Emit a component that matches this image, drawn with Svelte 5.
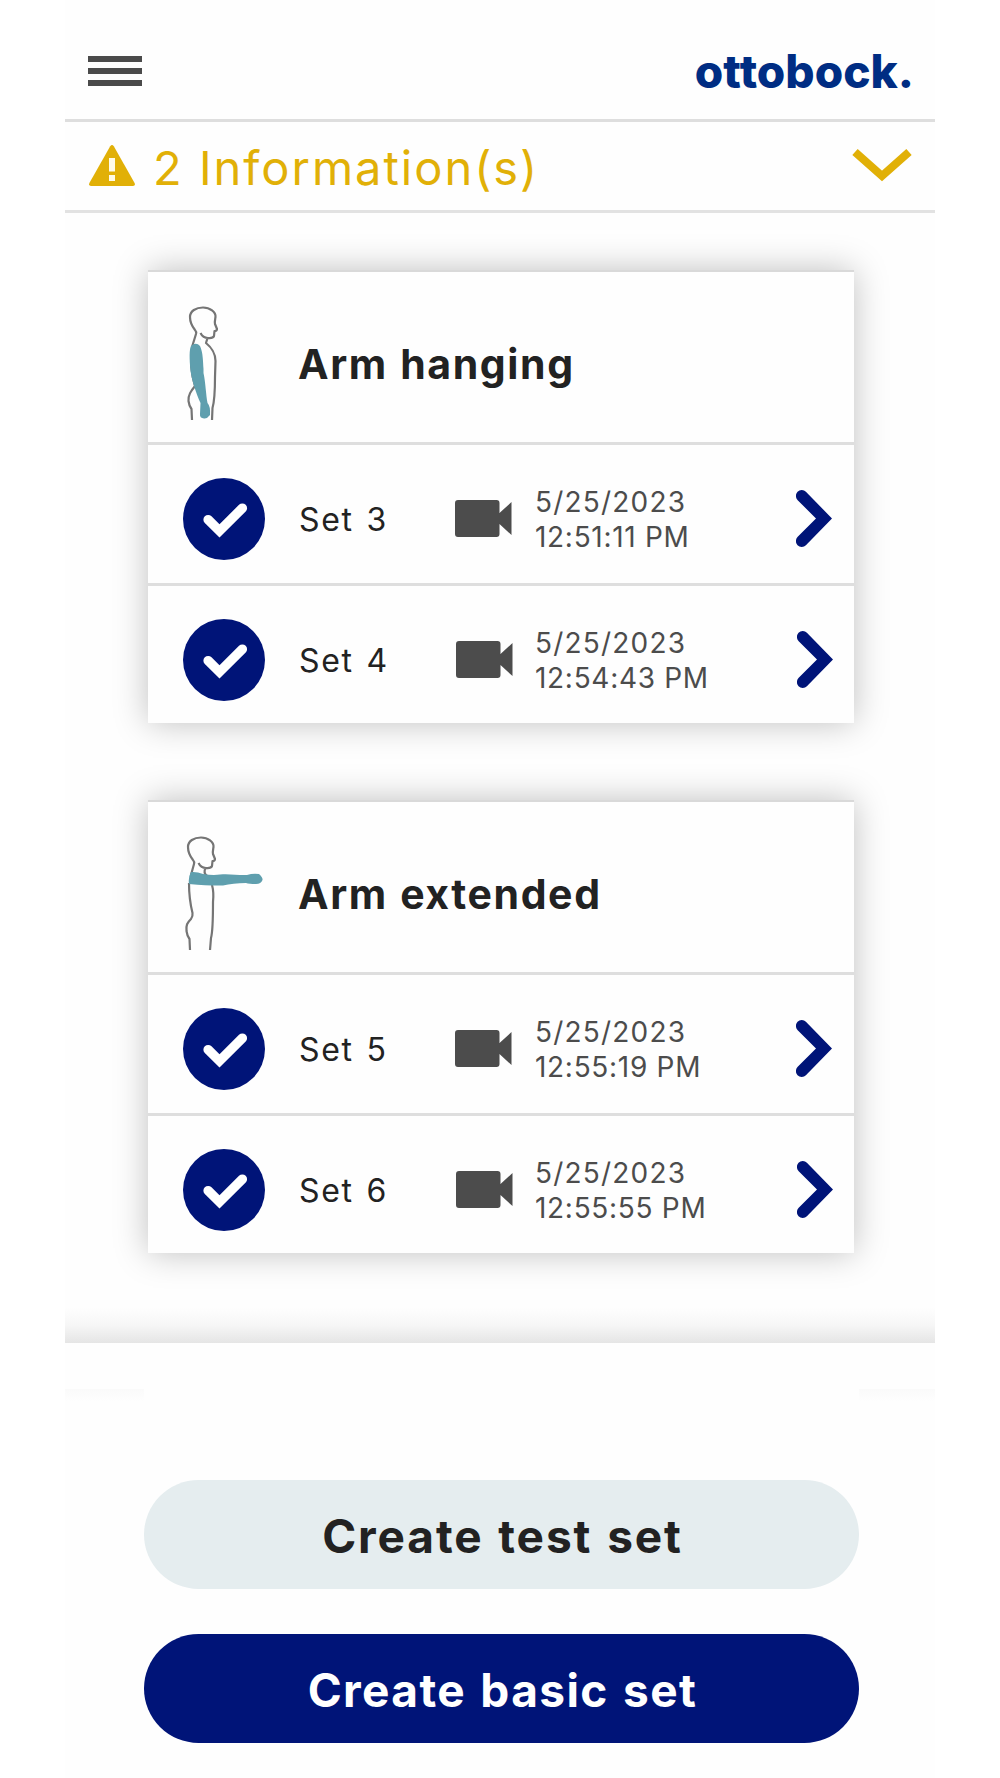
<script>
  const groups = [
    {
      title: "Arm hanging",
      pose: "hanging",
      sets: [
        { name: "Set 3", date: "5/25/2023", time: "12:51:11 PM" },
        { name: "Set 4", date: "5/25/2023", time: "12:54:43 PM" },
      ],
    },
    {
      title: "Arm extended",
      pose: "extended",
      sets: [
        { name: "Set 5", date: "5/25/2023", time: "12:55:19 PM" },
        { name: "Set 6", date: "5/25/2023", time: "12:55:55 PM" },
      ],
    },
  ];
</script>

<div class="screen">
  <header>
    <button class="menu" aria-label="Menu">
      <span></span>
      <span></span>
      <span></span>
    </button>
    <div class="logo">o<span class="tight">t</span>tobock.</div>
  </header>

  <div class="info">
    <svg class="warning" viewBox="0 0 46 41">
      <path
        d="M21.2 1.2Q23-1 24.8 1.2L45.6 38Q46.600 40.600 44 41H2Q-.6 40.600.4 38Z"
        fill="#e1b007"
      />
      <path d="M20 13h6v13.500h-6zM20 30h6v6h-6z" fill="#fffbe8" />
    </svg>
    <span class="info-text">2 Information(s)</span>
    <svg class="down" viewBox="0 0 60 33">
      <path d="M3 3 30 27 57 3" fill="none" stroke="#e1b007" stroke-width="8" />
    </svg>
  </div>

  <main>
    {#each groups as group}
      <section class="card">
        <div class="card-head">
          <svg class="figure" viewBox="0 0 80 116">
            {#if group.pose === "hanging"}
              <g class="outline">
                <path
                  d="M9 40 13 27C13.500 25 13 24 12 23C8 18 7 14 7 10C7 4 13 .5 20 .5C27 .5 33 5 32.500 10C32 13 31.500 15 32 17L34 22Q34 24 31.500 24L31 29Q30 31.500 25 31Q20 31 17.500 26M24.500 31 23 36C28 40 32.500 47 32.500 54L32 70C32 84 31.500 94 29.500 101L29 113M9 41C7 54 8 66 12 79C8 84 5 88 5.500 94C6 98 7 100 8.500 102L9 113"
                />
              </g>
              <path
                class="arm"
                d="M8 39Q13 34.500 17 39C20 45 20 55 20.500 62L20.500 66C22.500 75 23 88 24.500 96Q27.500 99 27 108Q24 112 21 111.500Q16.500 111 17 107L17.500 96C13 86 9 74 7.500 64Q5.500 44 8 39Z"
              />
            {:else}
              <g class="outline">
                <path
                  d="M8 38 11 27C11.500 25 11 24 10 23C6 18 5 14 5 10C5 4 11 .5 18 .5C25 .5 31 5 30.500 10C30 13 29.500 15 30 17L32 22Q32 24 29.500 24L29 29Q28 31.500 23 31Q18 31 15.500 26M22.500 31Q20 36 24 39M29 48Q31 55 30 65C30 84 30 94 28 101L27 113M6 46C6 54 7 66 9.500 76Q10 79 8 82C4 86 3 88 3.500 94C4 98 5 100 6.500 102L7 113"
                />
              </g>
              <path
                class="arm"
                d="M8 35Q14 34.500 20 37Q30 38.500 37 37.500C46 36.500 56 38.500 64 38Q70 36 76 37Q80 40.500 79.500 43Q78 47 73 47Q66 47 63 46Q50 46 40 48.500Q28 49 6 47Q5 40 8 35Z"
              />
            {/if}
          </svg>
          <h2>{group.title}</h2>
        </div>
        {#each group.sets as set}
          <div class="row">
            <svg class="check" viewBox="0 0 82 82">
              <circle cx="41" cy="41" r="41" fill="#001478" />
              <path
                d="M21.800 38.300a4.700 4.700 0 0 1 6.700 0l8 8 19.500-19.500a4.700 4.700 0 0 1 6.700 6.700L36.500 59.500 21.800 45a4.700 4.700 0 0 1 0-6.700Z"
                fill="#fff"
              />
            </svg>
            <span class="name">{set.name}</span>
            <svg class="video" viewBox="0 0 57 37">
              <path
                d="M3 0H41.500Q44.500 0 44.500 3V13L56.500 2V35L44.500 24V34Q44.500 37 41.500 37H3Q0 37 0 34V3Q0 0 3 0Z"
                fill="#4c4c4c"
              />
            </svg>
            <div class="stamp">
              <div class="date">{set.date}</div>
              <div>{set.time}</div>
            </div>
            <svg class="next" viewBox="0 0 36 57">
              <path
                d="M1.700 10.200a5.800 5.800 0 0 1 8.200-8.500L36 28.500 9.900 55.300a5.800 5.800 0 0 1-8.200-8.500L20 28.500Z"
                fill="#001478"
              />
            </svg>
          </div>
        {/each}
      </section>
    {/each}
  </main>

  <div class="fade"></div>
  <footer>
    <button class="btn">Create test set</button>
    <button class="btn primary">Create basic set</button>
  </footer>
</div>

<style>
  :global(body) {
    background: #fff;
  }

  .screen {
    box-sizing: border-box;
    width: 870px;
    height: 1778px;
    margin-left: 65px;
    overflow: hidden;
    background: #fefefe;
    font-family: Inter, "Liberation Sans", sans-serif;
    color: #222;
    display: flex;
    flex-direction: column;
  }

  header {
    height: 119px;
    box-sizing: border-box;
    padding: 23px 21px 0 23px;
    display: flex;
    align-items: center;
    justify-content: space-between;
  }

  button {
    border: 0;
    padding: 0;
    font-family: inherit;
  }

  .menu {
    background: none;
    display: flex;
    flex-direction: column;
    gap: 6px;
  }

  .menu span {
    width: 54px;
    height: 6px;
    background: #4a4a4a;
  }

  .logo {
    font-size: 46px;
    font-weight: 800;
    letter-spacing: 0;
    line-height: 50px;
    color: #002d83;
  }

  .tight {
    letter-spacing: -1px;
  }

  .info {
    box-sizing: border-box;
    height: 94px;
    padding: 0 23px;
    border-top: 3px solid #dedede;
    border-bottom: 3px solid #e2e2e2;
    display: flex;
    align-items: center;
    color: #e1b007;
  }

  .warning {
    width: 46px;
    height: 41px;
    margin-left: 1px;
    margin-bottom: 1px;
  }

  .info-text {
    flex: 1;
    margin-left: 18px;
    padding-top: 2px;
    font-size: 47px;
    letter-spacing: 2px;
    white-space: nowrap;
  }

  .down {
    width: 60px;
    height: 33px;
    margin-bottom: 1px;
  }

  main {
    padding: 57px 81px 0 83px;
    display: flex;
    flex-direction: column;
    gap: 77px;
  }

  .card {
    height: 453px;
    background: #fefefe;
    box-shadow: 0 0 32px rgba(0, 0, 0, 0.25);
  }

  .card-head {
    box-sizing: border-box;
    height: 172px;
    border-top: 2px solid #d9d9d9;
    padding: 35px 0 0 35px;
    display: flex;
  }

  .figure {
    width: 80px;
    height: 116px;
    overflow: visible;
  }

  .outline {
    fill: none;
    stroke: #757575;
    stroke-width: 2.2;
    stroke-linejoin: round;
  }

  .arm {
    fill: #5f9fae;
  }

  h2 {
    margin: 32px 0 0 35px;
    font-size: 41px;
    font-weight: 700;
    line-height: 50px;
    letter-spacing: 1.6px;
    word-spacing: 1px;
    white-space: nowrap;
  }

  .row {
    box-sizing: border-box;
    height: 141px;
    border-top: 3px solid #dedede;
    padding: 33px 22px 0 35px;
    display: grid;
    grid-template-columns: 116px 156px 80px 1fr 36px;
    align-items: center;
    align-content: start;
  }

  .row:last-child {
    padding-right: 21px;
  }

  .check {
    width: 82px;
    height: 82px;
  }

  .name {
    font-size: 32px;
    letter-spacing: 1.7px;
    word-spacing: 2px;
  }

  .video {
    width: 57px;
    height: 37px;
    margin-bottom: 2px;
  }

  .row:last-child .video {
    margin-left: 1px;
  }

  .stamp {
    padding-top: 2px;
    font-size: 28px;
    line-height: 35.5px;
    letter-spacing: 0.7px;
    color: #4c4c4c;
    white-space: nowrap;
  }

  .date {
    letter-spacing: 1.2px;
  }

  .next {
    width: 36px;
    height: 57px;
    margin-bottom: 1px;
  }

  .fade {
    height: 35px;
    margin-top: 55px;
    flex: none;
    background: linear-gradient(#fefefe, #f6f6f6 50%, #e5e5e5);
  }

  /* faint shadow line left and right of the button column */
  footer {
    margin-top: 46px;
    padding: 91px 76px 0 79px;
    display: flex;
    flex-direction: column;
    gap: 45px;
    background:
      linear-gradient(#fafafa, #fefefe) left top / 79px 12px no-repeat,
      linear-gradient(#fafafa, #fefefe) right top / 76px 12px no-repeat;
  }

  .btn {
    height: 109px;
    padding: 2px 0 0 2px;
    border-radius: 55px;
    background: #e5edef;
    color: #222;
    font-size: 46px;
    font-weight: 700;
    letter-spacing: 1.9px;
    word-spacing: 2px;
  }

  .primary {
    background: #001478;
    color: #fff;
    letter-spacing: 1.4px;
    word-spacing: 2px;
  }
</style>
